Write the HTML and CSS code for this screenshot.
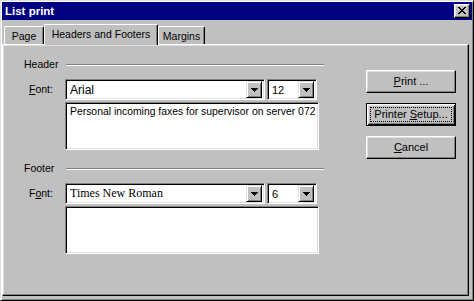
FILE: index.html
```html
<!DOCTYPE html>
<html lang="en">
<head>
  <meta charset="UTF-8">
  <meta name="viewport" content="width=device-width, initial-scale=1.0">
  <title>List print</title>
  <link rel="stylesheet" href="styles.css">
</head>
<body>
  <div class="window">
    <div class="titlebar">
      <span class="title">List print</span>
      <span class="close-btn">
        <svg width="14" height="12" viewBox="0 0 14 12" shape-rendering="crispEdges">
          <path fill="#000" d="M3 2h2v1H3z M9 2h2v1H9z M4 3h2v1H4z M8 3h2v1H8z M5 4h4v1H5z M6 5h2v1H6z M5 6h4v1H5z M4 7h2v1H4z M8 7h2v1H8z M3 8h2v1H3z M9 8h2v1H9z"/>
        </svg>
      </span>
    </div>

    <div class="tabs">
      <div class="tab tab-page">Page</div>
      <div class="tab tab-headers active">Headers and Footers</div>
      <div class="tab tab-margins">Margins</div>
    </div>

    <div class="panel">
      <div class="sections">
        <div class="section">
          <div class="group-title"><span>Header</span><div class="etch"></div></div>
          <div class="font-row">
            <label class="font-label"><u>F</u>ont:</label>
            <div class="fields">
              <div class="combo-row">
                <div class="combo name-combo">
                  <span class="combo-text arial">Arial</span>
                  <span class="drop"><svg width="7" height="4" shape-rendering="crispEdges"><path fill="#000" d="M0 0h7v1H0z M1 1h5v1H1z M2 2h3v1H2z M3 3h1v1H3z"/></svg></span>
                </div>
                <div class="combo size-combo">
                  <span class="combo-text">12</span>
                  <span class="drop"><svg width="7" height="4" shape-rendering="crispEdges"><path fill="#000" d="M0 0h7v1H0z M1 1h5v1H1z M2 2h3v1H2z M3 3h1v1H3z"/></svg></span>
                </div>
              </div>
              <div class="textbox">Personal incoming faxes for supervisor on server 072</div>
            </div>
          </div>
        </div>

        <div class="section">
          <div class="group-title"><span>Footer</span><div class="etch"></div></div>
          <div class="font-row">
            <label class="font-label">F<u>o</u>nt:</label>
            <div class="fields">
              <div class="combo-row">
                <div class="combo name-combo">
                  <span class="combo-text times">Times New Roman</span>
                  <span class="drop"><svg width="7" height="4" shape-rendering="crispEdges"><path fill="#000" d="M0 0h7v1H0z M1 1h5v1H1z M2 2h3v1H2z M3 3h1v1H3z"/></svg></span>
                </div>
                <div class="combo size-combo">
                  <span class="combo-text">6</span>
                  <span class="drop"><svg width="7" height="4" shape-rendering="crispEdges"><path fill="#000" d="M0 0h7v1H0z M1 1h5v1H1z M2 2h3v1H2z M3 3h1v1H3z"/></svg></span>
                </div>
              </div>
              <div class="textbox"></div>
            </div>
          </div>
        </div>
      </div>

      <div class="buttons">
        <div class="btn"><span class="btn-label"><u>P</u>rint ...</span></div>
        <div class="btn default"><span class="btn-label focus">Printer <u>S</u>etup...</span></div>
        <div class="btn"><span class="btn-label"><u>C</u>ancel</span></div>
      </div>
    </div>
  </div>
</body>
</html>
```

FILE: styles.css
```css
* {
  margin: 0px;
  padding: 0px;
  box-sizing: border-box;
}

body {
  background-color: #c0c0c0;
  font-family: "Liberation Sans", Arial, sans-serif;
  font-size: 10.5px;
  color: #000;
}

.window {
  width: 474px;
  height: 301px;
  padding: 1px;
  background-color: #c0c0c0;
  border: 1px solid;
  border-color: #dfdfdf #000 #000 #dfdfdf;
  box-shadow: inset 1px 1px #fff, inset -1px -1px #808080;
  display: flex;
  flex-direction: column;
}

/* title bar */
.titlebar {
  height: 18px;
  background-color: #000080;
  display: flex;
  align-items: center;
  padding-left: 3px;
  padding-right: 2px;
}

.title {
  color: #fff;
  font-weight: bold;
  font-size: 11.5px;
  flex: 1;
}

.close-btn {
  width: 16px;
  height: 14px;
  background-color: #c0c0c0;
  border: 1px solid;
  border-color: #fff #000 #000 #fff;
  box-shadow: inset -1px -1px #808080, inset 1px 1px #dfdfdf;
  display: block;
}

.close-btn svg {
  display: block;
}

/* tabs */
.tabs {
  height: 24px;
  display: flex;
  align-items: flex-end;
  padding-left: 2px;
}

.tab {
  height: 18px;
  display: flex;
  align-items: center;
  justify-content: center;
  border-top: 1px solid #fff;
  border-left: 1px solid #fff;
  border-right: 1px solid #000;
  border-radius: 2px 2px 0px 0px;
  box-shadow: inset -1px 0px #808080;
  background-color: #c0c0c0;
}

.tab-page {
  width: 40px;
}

.tab-headers {
  width: 114px;
}

.tab-margins {
  width: 47px;
}

.tab.active {
  height: 21px;
  margin-bottom: -1px;
  position: relative;
  z-index: 1;
  padding-bottom: 2px;
}

/* panel */
.panel {
  width: 467px;
  height: 252px;
  border: 1px solid;
  border-color: #fff #000 #000 #fff;
  box-shadow: inset -1px -1px #808080, inset 1px 1px #dfdfdf;
  display: flex;
  padding-top: 12px;
}

.sections {
  width: 321px;
}

.section {
  margin-bottom: 11px;
}

.group-title {
  height: 13px;
  display: flex;
  align-items: center;
  padding-left: 21px;
}

.etch {
  margin-left: auto;
  width: 258px;
  height: 2px;
  border-top: 1px solid #808080;
  border-bottom: 1px solid #fff;
  margin-top: 2px;
}

.font-row {
  display: grid;
  grid-template-columns: 62px 254px;
  margin-top: 9px;
}

.font-label {
  padding-left: 26px;
  height: 21px;
  line-height: 21px;
}

.fields {
  display: flex;
  flex-direction: column;
  gap: 2px;
}

.combo-row {
  display: flex;
  gap: 2px;
}

.combo {
  height: 21px;
  background-color: #fff;
  border: 1px solid;
  border-color: #808080 #fff #fff #808080;
  box-shadow: inset 1px 1px #000, inset -1px -1px #dfdfdf;
  display: flex;
  align-items: center;
  padding: 2px 2px 2px 4px;
}

.name-combo {
  width: 200px;
}

.size-combo {
  width: 50px;
}

.combo-text {
  flex: 1;
  font-size: 11px;
  white-space: nowrap;
  overflow: hidden;
}

.combo-text.arial {
  font-size: 12px;
}

.combo-text.times {
  font-family: "Liberation Serif", "Times New Roman", serif;
  font-size: 12px;
}

.drop {
  width: 16px;
  height: 17px;
  background-color: #c0c0c0;
  border: 1px solid;
  border-color: #dfdfdf #000 #000 #dfdfdf;
  box-shadow: inset 1px 1px #fff, inset -1px -1px #808080;
  display: flex;
  align-items: center;
  justify-content: center;
}

.drop svg {
  display: block;
  margin-left: 1px;
}

.textbox {
  height: 48px;
  background-color: #fff;
  border: 1px solid;
  border-color: #808080 #fff #fff #808080;
  box-shadow: inset 1px 1px #000, inset -1px -1px #dfdfdf;
  padding: 2px 3px 0px 4px;
  font-size: 10.4px;
  line-height: 13px;
  white-space: nowrap;
  overflow: hidden;
}

/* buttons */
.buttons {
  margin-left: 42px;
  margin-top: 13px;
  display: flex;
  flex-direction: column;
  gap: 10px;
}

.btn {
  width: 90px;
  height: 23px;
  background-color: #c0c0c0;
  border: 1px solid;
  border-color: #fff #000 #000 #fff;
  box-shadow: inset -1px -1px #808080, inset 1px 1px #dfdfdf;
  display: flex;
  padding: 3px;
  font-size: 11px;
}

.btn.default {
  border-color: #000;
  box-shadow: inset 1px 1px #fff, inset -1px -1px #000, inset 2px 2px #dfdfdf, inset -2px -2px #808080;
}

.btn-label {
  flex: 1;
  display: block;
  text-align: center;
  line-height: 13px;
  border: 1px solid transparent;
  white-space: nowrap;
}

.btn-label.focus {
  border: 1px dotted #000;
}
```
